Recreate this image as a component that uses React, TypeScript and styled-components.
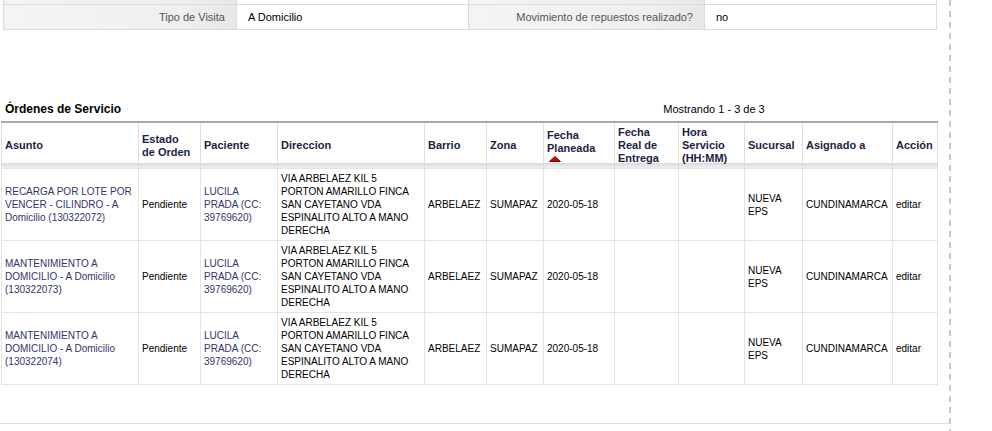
import React from 'react'
import styled, { createGlobalStyle } from 'styled-components'

const GlobalStyle = createGlobalStyle`
    html, body {
        margin: 0;
        padding: 0;
        background: #fff;
    }
    body {
        font-family: 'Liberation Sans', Arial, sans-serif;
        font-size: 11px;
        color: #000;
    }
`

const Page = styled.div`
    display: flex;
    height: 431px;
    overflow: hidden;
`

const Main = styled.div`
    width: 949px;
    height: 423px;
    flex-shrink: 0;
    border-bottom: 1px solid #dedede;
`

const Divider = styled.div`
    width: 2px;
    background: repeating-linear-gradient(to bottom, #c9c9c9 0 6px, transparent 6px 11px);
`

const InfoTable = styled.table`
    margin: -1px 0 0 3px;
    width: 933px;
    border-collapse: collapse;
    table-layout: fixed;
`

const InfoRow = styled.tr<{ $h: number }>`
    height: ${p => p.$h}px;
`

const InfoLabel = styled.td`
    border: 1px solid #dcdcdc;
    background: linear-gradient(to right, #f4f4f4 0%, #efefef 75%, #e7e7e7 100%);
    color: #555;
    text-align: right;
    padding: 0 11px;
    font-size: 11px;
`

const InfoValue = styled.td`
    border: 1px solid #dcdcdc;
    padding: 0 11px;
    font-size: 11px;
`

const SectionHead = styled.div`
    display: flex;
    align-items: center;
    width: 936px;
    height: 13px;
    margin: 72px 0 6px 1px;
`

const SectionTitle = styled.div`
    flex: 1;
    padding-left: 4px;
    font-weight: bold;
    font-size: 12px;
`

const Pager = styled.div`
    width: 446px;
    text-align: center;
    font-size: 11px;
`

const OrdersTable = styled.table`
    margin-left: 1px;
    width: 936px;
    border-collapse: collapse;
    table-layout: fixed;
    border-top: 2px solid #a9a9a9;
`

const Th = styled.th`
    text-align: left;
    vertical-align: middle;
    font-weight: bold;
    font-size: 11px;
    line-height: 13px;
    color: #1d1d45;
    padding: 3px;
    border-left: 1px solid #dedede;
    border-right: 1px solid #dedede;
    background: linear-gradient(to bottom, #fff 0, #fff calc(100% - 5px), #dadada calc(100% - 5px), #efefef 100%);
`

const Td = styled.td<{ $link?: boolean }>`
    font-size: 10px;
    line-height: 13px;
    padding: 3px;
    vertical-align: middle;
    border: 1px solid #e4e4e4;
    color: ${p => (p.$link ? '#33336b' : '#000')};
    overflow-wrap: break-word;
`

const SortArrow = styled.svg`
    display: block;
    margin: 1px 0 0 2px;
`

const columns = [137, 62, 77, 147, 62, 57, 71, 64, 66, 58, 90, 45]

const orders = [
    { asunto: 'RECARGA POR LOTE POR VENCER - CILINDRO - A Domicilio (130322072)' },
    { asunto: 'MANTENIMIENTO A DOMICILIO - A Domicilio (130322073)' },
    { asunto: 'MANTENIMIENTO A DOMICILIO - A Domicilio (130322074)' },
]

const App: React.FC = () => {
    return <Page>
        <GlobalStyle />
        <Main>
            <InfoTable>
                <colgroup>
                    <col style={{ width: 233 }} />
                    <col style={{ width: 232 }} />
                    <col style={{ width: 236 }} />
                    <col style={{ width: 232 }} />
                </colgroup>
                <tbody>
                    <InfoRow $h={5}>
                        <InfoLabel />
                        <InfoValue />
                        <InfoLabel />
                        <InfoValue />
                    </InfoRow>
                    <InfoRow $h={25}>
                        <InfoLabel>Tipo de Visita</InfoLabel>
                        <InfoValue>A Domicilio</InfoValue>
                        <InfoLabel>Movimiento de repuestos realizado?</InfoLabel>
                        <InfoValue>no</InfoValue>
                    </InfoRow>
                </tbody>
            </InfoTable>

            <SectionHead>
                <SectionTitle>Órdenes de Servicio</SectionTitle>
                <Pager>Mostrando 1 - 3 de 3</Pager>
            </SectionHead>

            <OrdersTable>
                <colgroup>
                    {columns.map((w, i) => <col key={i} style={{ width: w }} />)}
                </colgroup>
                <thead>
                    <tr>
                        <Th>Asunto</Th>
                        <Th>Estado<br />de Orden</Th>
                        <Th>Paciente</Th>
                        <Th>Direccion</Th>
                        <Th>Barrio</Th>
                        <Th>Zona</Th>
                        <Th>
                            Fecha Planeada
                            <SortArrow width="12" height="6" viewBox="0 0 12 6">
                                <polygon points="0.5,5.5 6,0.5 11.5,5.5" fill="#d60000" stroke="#800000" strokeWidth="1" />
                            </SortArrow>
                        </Th>
                        <Th>Fecha Real de Entrega</Th>
                        <Th>Hora Servicio (HH:MM)</Th>
                        <Th>Sucursal</Th>
                        <Th>Asignado a</Th>
                        <Th>Acción</Th>
                    </tr>
                </thead>
                <tbody>
                    {orders.map((o, i) => <tr key={i}>
                        <Td $link>{o.asunto}</Td>
                        <Td>Pendiente</Td>
                        <Td $link>LUCILA PRADA (CC: 39769620)</Td>
                        <Td>VIA ARBELAEZ KIL 5 PORTON AMARILLO FINCA SAN CAYETANO VDA ESPINALITO ALTO A MANO DERECHA</Td>
                        <Td>ARBELAEZ</Td>
                        <Td>SUMAPAZ</Td>
                        <Td>2020-05-18</Td>
                        <Td></Td>
                        <Td></Td>
                        <Td>NUEVA EPS</Td>
                        <Td>CUNDINAMARCA</Td>
                        <Td>editar</Td>
                    </tr>)}
                </tbody>
            </OrdersTable>
        </Main>
        <Divider />
    </Page>
}

export default App
